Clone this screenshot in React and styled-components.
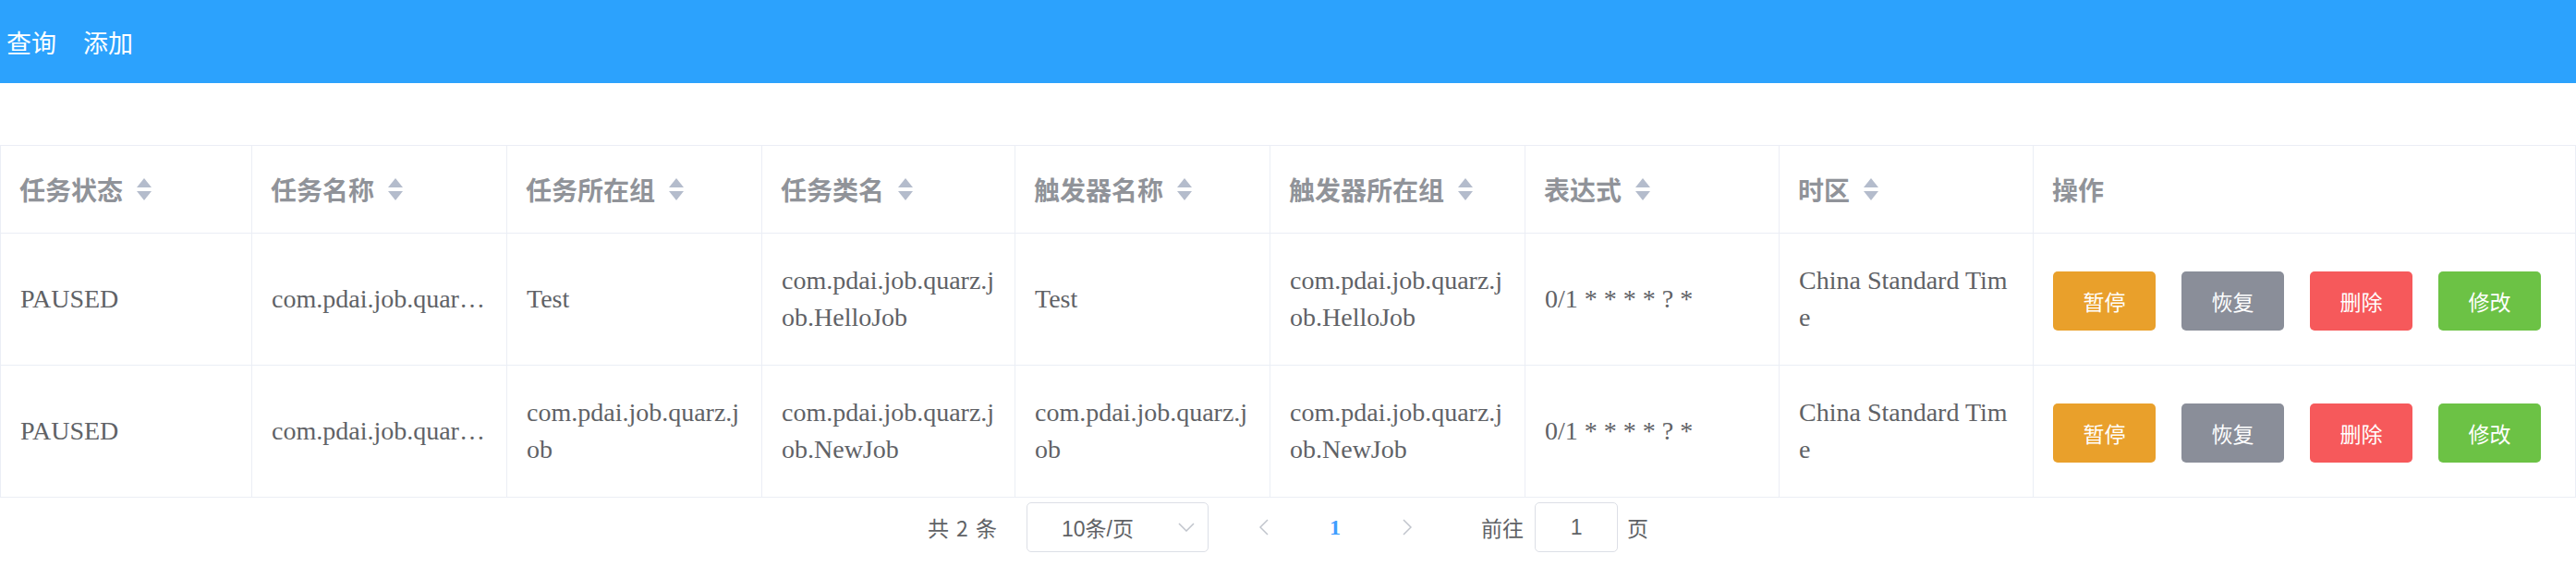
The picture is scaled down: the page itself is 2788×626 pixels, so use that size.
import React from 'react';
import styled, { createGlobalStyle } from 'styled-components';

const GlobalStyle = createGlobalStyle`
	html, body {
		margin: 0;
		padding: 0;
		background: #fff;
	}
	body {
		font-family: "Liberation Serif", "Noto Sans CJK SC", serif;
	}
`;

const NavBar = styled.div`
	height: 90px;
	background: #2ca2fd;
	display: flex;
	align-items: center;
	gap: 29px;
	padding-left: 7px;
	font-family: "Noto Sans CJK SC", sans-serif;
	font-size: 27px;
	color: #fff;
`;

const NavItem = styled.span`
	cursor: pointer;
	line-height: 1;
`;

const Table = styled.table`
	margin-top: 67px;
	width: 100%;
	table-layout: fixed;
	border-collapse: collapse;
	border-top: 1px solid #ebeef5;
	border-bottom: 1px solid #ebeef5;
`;

const Col = styled.col`
	width: ${(p) => (p.w ? `${p.w}px` : 'auto')};
`;

const Th = styled.th`
	padding: 27px 22px 27px 20px;
	border: 1px solid #ebeef5;
	text-align: left;
	line-height: 40px;
	font-family: "Noto Sans CJK SC", sans-serif;
	font-size: 28px;
	font-weight: 700;
	color: #909399;
	white-space: nowrap;
`;

const HeadLabel = styled.span`
	display: inline-flex;
	align-items: center;
	gap: 14px;
`;

const Td = styled.td`
	padding: 31px 20px 31px 21px;
	border: 1px solid #ebeef5;
	vertical-align: middle;
	line-height: 40px;
	font-size: 28px;
	color: #606266;
	word-break: break-all;
`;

const Ellipsis = styled.div`
	white-space: nowrap;
	overflow: hidden;
	text-overflow: ellipsis;
`;

const ButtonGroup = styled.div`
	display: flex;
	gap: 28px;
	padding-top: 3px;
`;

const Button = styled.button`
	width: 111px;
	height: 64px;
	border: none;
	border-radius: 5px;
	background: ${(p) => p.color};
	color: #fff;
	font-family: "Noto Sans CJK SC", sans-serif;
	font-size: 23px;
	padding: 0;
	cursor: pointer;
`;

const Pager = styled.div`
	display: flex;
	justify-content: center;
	align-items: center;
	height: 64px;
	font-family: "Noto Sans CJK SC", sans-serif;
	font-size: 23px;
	color: #606266;
`;

const Total = styled.span`
	margin-right: 32px;
	word-spacing: 3px;
`;

const Select = styled.div`
	box-sizing: border-box;
	width: 197px;
	height: 54px;
	border: 1px solid #dcdfe6;
	border-radius: 5px;
	display: flex;
	align-items: center;
	justify-content: space-between;
	padding: 0 14px 0 37px;
	font-family: "Liberation Sans", "Noto Sans CJK SC", sans-serif;
	margin-right: 30px;
`;

const PageBtn = styled.div`
	width: 60px;
	height: 54px;
	display: flex;
	align-items: center;
	justify-content: center;
	margin-right: ${(p) => p.mr || 0}px;
`;

const PageNum = styled(PageBtn)`
	color: #409eff;
	font-family: "Liberation Serif", serif;
	font-weight: 700;
	font-size: 24px;
`;

const Jump = styled.span`
	margin-right: 12px;
`;

const JumpInput = styled.div`
	box-sizing: border-box;
	width: 90px;
	height: 54px;
	border: 1px solid #dcdfe6;
	border-radius: 5px;
	display: flex;
	align-items: center;
	justify-content: center;
	font-family: "Liberation Sans", sans-serif;
	margin-right: 10px;
`;

const SortIcon = () => (
	<svg width="18" height="26" viewBox="0 0 18 26">
		<path d="M9 1 L17 11 L1 11 Z" fill="#b4bccc" />
		<path d="M1 15 L17 15 L9 25 Z" fill="#b4bccc" />
	</svg>
);

const Chevron = ({ dir }) => (
	<svg width="10" height="18" viewBox="0 0 10 18">
		<polyline
			points={dir === 'left' ? '9,1 1,9 9,17' : '1,1 9,9 1,17'}
			fill="none"
			stroke="#c0c4cc"
			strokeWidth="1.5"
		/>
	</svg>
);

const columns = [
	{ title: '任务状态', w: 272, sort: true },
	{ title: '任务名称', w: 276, sort: true },
	{ title: '任务所在组', w: 276, sort: true },
	{ title: '任务类名', w: 274, sort: true },
	{ title: '触发器名称', w: 276, sort: true },
	{ title: '触发器所在组', w: 276, sort: true },
	{ title: '表达式', w: 275, sort: true },
	{ title: '时区', w: 275, sort: true },
	{ title: '操作' }
];

const rows = [
	{
		state: 'PAUSED',
		name: 'com.pdai.job.quarz.job.HelloJob',
		group: 'Test',
		className: 'com.pdai.job.quarz.job.HelloJob',
		trigger: 'Test',
		triggerGroup: 'com.pdai.job.quarz.job.HelloJob',
		cron: '0/1 * * * * ? *',
		zone: 'China Standard Time'
	},
	{
		state: 'PAUSED',
		name: 'com.pdai.job.quarz.job.NewJob',
		group: 'com.pdai.job.quarz.job',
		className: 'com.pdai.job.quarz.job.NewJob',
		trigger: 'com.pdai.job.quarz.job',
		triggerGroup: 'com.pdai.job.quarz.job.NewJob',
		cron: '0/1 * * * * ? *',
		zone: 'China Standard Time'
	}
];

const actions = [
	{ text: '暂停', color: '#e9a02b' },
	{ text: '恢复', color: '#8a8e99' },
	{ text: '删除', color: '#f6595b' },
	{ text: '修改', color: '#6cc245' }
];

export default function App() {
	return (
		<>
			<GlobalStyle />
			<NavBar>
				<NavItem>查询</NavItem>
				<NavItem>添加</NavItem>
			</NavBar>
			<Table>
				<colgroup>
					{columns.map((c) => (
						<Col key={c.title} w={c.w} />
					))}
				</colgroup>
				<thead>
					<tr>
						{columns.map((c) => (
							<Th key={c.title}>
								<HeadLabel>
									{c.title}
									{c.sort && <SortIcon />}
								</HeadLabel>
							</Th>
						))}
					</tr>
				</thead>
				<tbody>
					{rows.map((r, i) => (
						<tr key={i}>
							<Td>{r.state}</Td>
							<Td>
								<Ellipsis>{r.name}</Ellipsis>
							</Td>
							<Td>{r.group}</Td>
							<Td>{r.className}</Td>
							<Td>{r.trigger}</Td>
							<Td>{r.triggerGroup}</Td>
							<Td>{r.cron}</Td>
							<Td>{r.zone}</Td>
							<Td>
								<ButtonGroup>
									{actions.map((a) => (
										<Button key={a.text} color={a.color}>
											{a.text}
										</Button>
									))}
								</ButtonGroup>
							</Td>
						</tr>
					))}
				</tbody>
			</Table>
			<Pager>
				<Total>共 2 条</Total>
				<Select>
					<span>10条/页</span>
					<svg width="18" height="10" viewBox="0 0 18 10">
						<polyline points="1,1 9,9 17,1" fill="none" stroke="#c0c4cc" strokeWidth="1.5" />
					</svg>
				</Select>
				<PageBtn mr={17}>
					<Chevron dir="left" />
				</PageBtn>
				<PageNum mr={18}>1</PageNum>
				<PageBtn mr={50}>
					<Chevron dir="right" />
				</PageBtn>
				<Jump>前往</Jump>
				<JumpInput>1</JumpInput>
				<span>页</span>
			</Pager>
		</>
	);
}
